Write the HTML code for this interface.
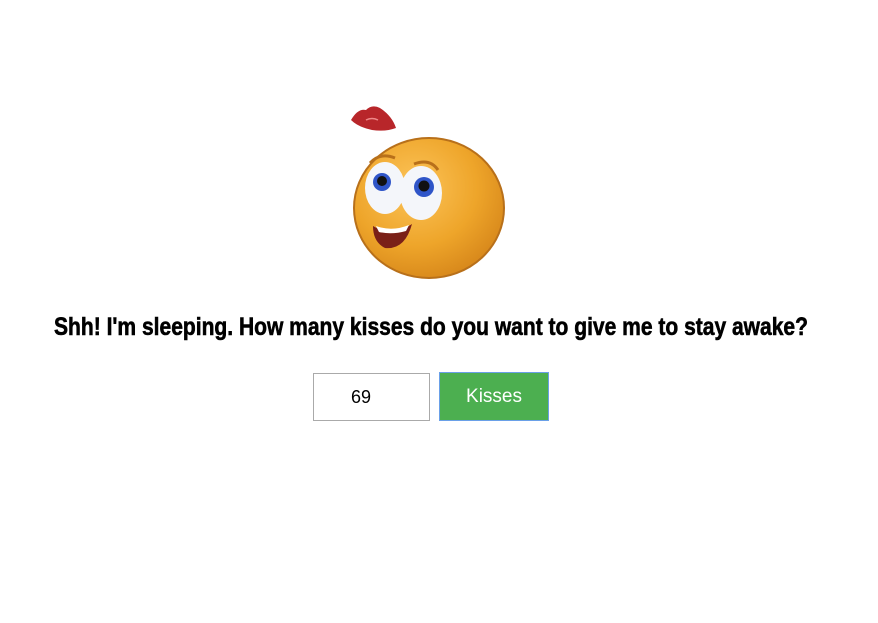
<!DOCTYPE html>
<html><head><style>
body{margin:0;background:#fff;width:878px;height:623px;position:relative;overflow:hidden}
h1{position:absolute;left:-69px;width:1000px;top:313px;margin:0;text-align:center;white-space:nowrap;font:900 25px "Liberation Sans",sans-serif;transform:scaleX(0.841);transform-origin:500px 0;color:#000;-webkit-text-stroke:0.6px #000}
.inp{position:absolute;left:313px;top:373px;width:117px;height:48px;border:1px solid #aaa;box-sizing:border-box;font:18px "Liberation Sans",sans-serif;padding-left:37px;line-height:46px}
.btn{position:absolute;left:439px;top:372px;width:110px;height:49px;background:#4CAF50;border:1px solid #6aa0e8;box-sizing:border-box;color:#fff;font:19px "Liberation Sans",sans-serif;text-align:center;line-height:48px}
</style></head><body>
<svg style="position:absolute;left:336px;top:96px" width="188" height="188" viewBox="336 96 188 188">
<defs><radialGradient id="g" cx="0.4" cy="0.35" r="0.7"><stop offset="0" stop-color="#fcc45a"/><stop offset="0.6" stop-color="#eea52a"/><stop offset="1" stop-color="#d6861a"/></radialGradient></defs>
<path d="M351 120 Q358 108 366 110 Q372 104 380 108 Q392 116 396 128 Q385 132 372 130 Q358 127 351 120Z" fill="#b8262a"/>
<path d="M366 120 Q372 117 378 120" stroke="#e88" stroke-width="1.5" fill="none"/>
<ellipse cx="429" cy="208" rx="75" ry="70" fill="url(#g)" stroke="#b8701a" stroke-width="2"/>
<ellipse cx="385" cy="188" rx="20" ry="26" fill="#f4f6fa"/>
<ellipse cx="421" cy="193" rx="21" ry="27" fill="#f4f6fa"/>
<circle cx="382" cy="182" r="9" fill="#2f55c8"/><circle cx="382" cy="181" r="5" fill="#111"/>
<circle cx="424" cy="187" r="10" fill="#2f55c8"/><circle cx="424" cy="186" r="5.5" fill="#111"/>
<path d="M370 163 Q380 152 395 158 M414 164 Q430 158 438 170" stroke="#b8701a" stroke-width="3" fill="none"/>
<path d="M373 226 Q392 238 412 224 Q405 250 385 248 Q373 242 373 226Z" fill="#7a2018"/>
<path d="M376 226 Q392 232 409 225 L406 231 Q392 235 379 232Z" fill="#fff"/>
</svg>
<h1>Shh! I'm sleeping. How many kisses do you want to give me to stay awake?</h1>
<div class="inp">69</div>
<div class="btn">Kisses</div>
</body></html>
